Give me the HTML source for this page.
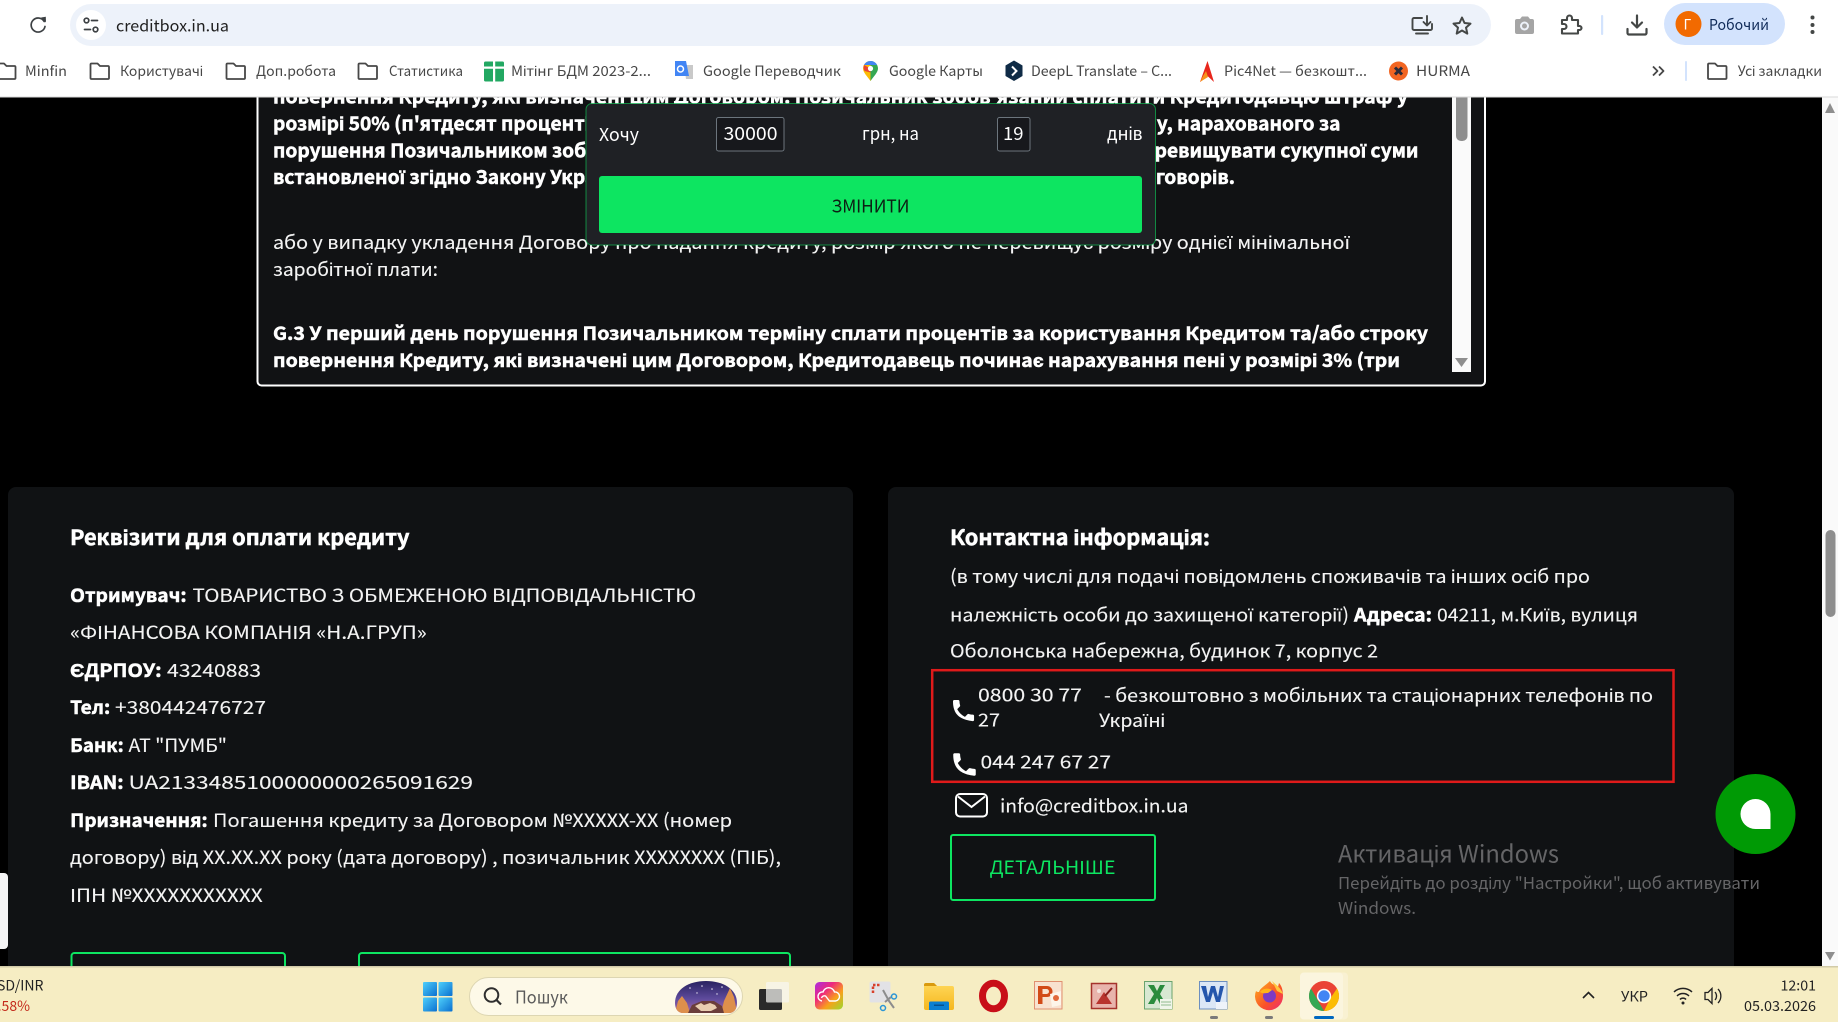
<!DOCTYPE html>
<html lang="uk"><head><meta charset="utf-8"><title>creditbox.in.ua</title>
<style>
html,body{margin:0;padding:0;width:1838px;height:1022px;overflow:hidden;background:#000}
svg{display:block;position:absolute;left:0;top:0}
text{font-family:"Noto Sans CJK SC","Liberation Sans",sans-serif;white-space:pre}
.r{font-size:18.5px;fill:#f4f4f4;font-weight:400;stroke:#f4f4f4;stroke-width:.12px}
.b{font-size:18.5px;fill:#fff;font-weight:700;stroke:#fff;stroke-width:.5px}
.p{font-size:19.2px;fill:#fff;font-weight:700;stroke:#fff;stroke-width:.5px}
.h{font-size:21px;fill:#fff;font-weight:700;stroke:#fff;stroke-width:.55px}
.m{font-size:14px;fill:#474747}
.t{font-size:14px;fill:#222}
.a{fill:#656567;font-weight:400}
</style></head><body>
<svg width="1838" height="1022" viewBox="0 0 1838 1022" xmlns="http://www.w3.org/2000/svg">
<defs>
<linearGradient id="win" x1="0" y1="0" x2="1" y2="1"><stop offset="0" stop-color="#4fd0fb"/><stop offset="1" stop-color="#0a6fd0"/></linearGradient>
<linearGradient id="cc" x1="0" y1="0" x2="1" y2="1"><stop offset="0" stop-color="#a92be6"/><stop offset=".35" stop-color="#ee2a7b"/><stop offset=".65" stop-color="#f9a01b"/><stop offset="1" stop-color="#9ad92e"/></linearGradient>
<linearGradient id="fo" x1="0" y1="0" x2="0" y2="1"><stop offset="0" stop-color="#ffd85a"/><stop offset="1" stop-color="#f5b71f"/></linearGradient>
<linearGradient id="ff" x1="0" y1="0" x2="1" y2="1"><stop offset="0" stop-color="#ffb31a"/><stop offset=".6" stop-color="#f9502a"/><stop offset="1" stop-color="#ec2a78"/></linearGradient>
<linearGradient id="sky" x1="0" y1="0" x2="0" y2="1"><stop offset="0" stop-color="#2a2360"/><stop offset=".55" stop-color="#5d4a9c"/><stop offset="1" stop-color="#a869a8"/></linearGradient>
<clipPath id="art"><path d="M675 1003c0-14 14-22 31-22s31 8 31 22c0 6-3 10-8 10h-46c-5 0-8-4-8-10z"/></clipPath>
</defs>

<!-- page -->
<rect width="1838" height="1022" fill="#000"/>

<!-- text box -->
<rect x="257.500" y="80" width="1227.500" height="305.500" rx="4" fill="#111214" stroke="#fff" stroke-width="2"/>
<text class="b" x="273" y="103.500" textLength="1135" lengthAdjust="spacingAndGlyphs">повернення Кредиту, які визначені цим Договором. Позичальник зобов'язаний сплатити Кредитодавцю штраф у</text>
<text class="p" x="273" y="130.500">розмірі 50% (п'ятдесят процентів) від</text>
<text class="p" x="1340.500" y="130.500" text-anchor="end">у, нарахованого за</text>
<text class="p" x="273" y="157.500">порушення Позичальником зобов'язань</text>
<text class="p" x="1418.500" y="157.500" text-anchor="end">перевищувати сукупної суми</text>
<text class="p" x="273" y="184">встановленої згідно Закону України</text>
<text class="p" x="1235" y="184" text-anchor="end">договорів.</text>
<text class="r" x="273" y="249" textLength="1077" lengthAdjust="spacingAndGlyphs">або у випадку укладення Договору про надання кредиту, розмір якого не перевищує розміру однієї мінімальної</text>
<text class="r" x="273" y="276" textLength="165" lengthAdjust="spacingAndGlyphs">заробітної плати:</text>
<text class="b" x="273" y="340" textLength="1155" lengthAdjust="spacingAndGlyphs">G.3 У перший день порушення Позичальником терміну сплати процентів за користування Кредитом та/або строку</text>
<text class="b" x="273" y="367" textLength="1127" lengthAdjust="spacingAndGlyphs">повернення Кредиту, які визначені цим Договором, Кредитодавець починає нарахування пені у розмірі 3% (три</text>
<rect x="1452" y="97" width="19" height="275" fill="#fafafa"/>
<rect x="1456" y="90" width="11.500" height="51" rx="5" fill="#8e8e8e"/>
<path d="M1455 358h13l-6.500 9z" fill="#8e8e8e"/>

<!-- popup -->
<rect x="586" y="103.500" width="569.500" height="141.500" rx="6" fill="#1f2125" stroke="#0de561" stroke-opacity=".55"/>
<text x="599" y="141" font-size="18" fill="#fff" textLength="40" lengthAdjust="spacingAndGlyphs">Хочу</text>
<rect x="716.500" y="117.500" width="67.500" height="33.500" rx="2" fill="#17181c" stroke="#6c757d"/>
<text x="723.500" y="140" font-size="18" fill="#fff" textLength="54" lengthAdjust="spacingAndGlyphs">30000</text>
<text x="862" y="140" font-size="18" fill="#fff" textLength="57" lengthAdjust="spacingAndGlyphs">грн, на</text>
<rect x="997.500" y="117.500" width="32.500" height="33.500" rx="2" fill="#17181c" stroke="#6c757d"/>
<text x="1003" y="140" font-size="18" fill="#fff" textLength="20.500" lengthAdjust="spacingAndGlyphs">19</text>
<text x="1107" y="140" font-size="18" fill="#fff" textLength="35.500" lengthAdjust="spacingAndGlyphs">днів</text>
<rect x="599" y="176" width="543" height="57" rx="3" fill="#0de561"/>
<text x="831.500" y="212.500" font-size="18" fill="#0d1f14" textLength="78" lengthAdjust="spacingAndGlyphs">ЗМІНИТИ</text>

<!-- cards -->
<rect x="8" y="487" width="845" height="500" rx="8" fill="#101214"/>
<rect x="888" y="487" width="846" height="500" rx="8" fill="#101214"/>

<text class="h" x="70" y="545" textLength="339.500" lengthAdjust="spacingAndGlyphs">Реквізити для оплати кредиту</text>
<text class="b" x="70.200" y="602" textLength="116.500" lengthAdjust="spacingAndGlyphs">Отримувач:</text>
<text class="r" x="192.500" y="602" textLength="503.500" lengthAdjust="spacingAndGlyphs">ТОВАРИСТВО З ОБМЕЖЕНОЮ ВІДПОВІДАЛЬНІСТЮ</text>
<text class="r" x="70.200" y="639" textLength="356.500" lengthAdjust="spacingAndGlyphs">«ФІНАНСОВА КОМПАНІЯ «Н.А.ГРУП»</text>
<text class="b" x="70.200" y="677" textLength="91.500" lengthAdjust="spacingAndGlyphs">ЄДРПОУ:</text>
<text class="r" x="167" y="677" textLength="94" lengthAdjust="spacingAndGlyphs">43240883</text>
<text class="b" x="70.200" y="714" textLength="40" lengthAdjust="spacingAndGlyphs">Тел:</text>
<text class="r" x="115" y="714" textLength="151" lengthAdjust="spacingAndGlyphs">+380442476727</text>
<text class="b" x="70.200" y="752" textLength="53.500" lengthAdjust="spacingAndGlyphs">Банк:</text>
<text class="r" x="128.500" y="752" textLength="98.500" lengthAdjust="spacingAndGlyphs">АТ "ПУМБ"</text>
<text class="b" x="70.200" y="789" textLength="53.500" lengthAdjust="spacingAndGlyphs">IBAN:</text>
<text class="r" x="128.500" y="789" textLength="344.500" lengthAdjust="spacingAndGlyphs">UA2133485100000000265091629</text>
<text class="b" x="70.200" y="827" textLength="137.500" lengthAdjust="spacingAndGlyphs">Призначення:</text>
<text class="r" x="213" y="827" textLength="519" lengthAdjust="spacingAndGlyphs">Погашення кредиту за Договором №XXXXX-XX (номер</text>
<text class="r" x="70" y="864" textLength="711" lengthAdjust="spacingAndGlyphs">договору) від XX.XX.XX року (дата договору) , позичальник XXXXXXXX (ПІБ),</text>
<text class="r" x="70.200" y="902" textLength="192.500" lengthAdjust="spacingAndGlyphs">ІПН №XXXXXXXXXXX</text>
<path d="M71.500 975v-19a3 3 0 0 1 3-3h207.500a3 3 0 0 1 3 3v19M359 975v-19a3 3 0 0 1 3-3h425a3 3 0 0 1 3 3v19" fill="none" stroke="#0de561" stroke-width="2"/>

<text class="h" x="950" y="545" textLength="260" lengthAdjust="spacingAndGlyphs">Контактна інформація:</text>
<text class="r" x="950" y="583" textLength="640" lengthAdjust="spacingAndGlyphs">(в тому числі для подачі повідомлень споживачів та інших осіб про</text>
<text class="r" x="950" y="621.500" textLength="399" lengthAdjust="spacingAndGlyphs">належність особи до захищеної категорії)</text>
<text class="b" x="1354" y="621.500" textLength="78" lengthAdjust="spacingAndGlyphs">Адреса:</text>
<text class="r" x="1437" y="621.500" textLength="201" lengthAdjust="spacingAndGlyphs">04211, м.Київ, вулиця</text>
<text class="r" x="950" y="657.700" textLength="428" lengthAdjust="spacingAndGlyphs">Оболонська набережна, будинок 7, корпус 2</text>
<rect x="932.200" y="670.200" width="741.300" height="111.600" fill="none" stroke="#df1a1a" stroke-width="2.500"/>
<path transform="translate(949.500 696.500) scale(1.17)" fill="#fff" d="M6.620 10.790c1.440 2.830 3.760 5.140 6.590 6.590l2.200-2.200c.27-.27.67-.36 1.020-.24 1.120.37 2.330.57 3.570.57.55 0 1 .45 1 1V20c0 .55-.45 1-1 1-1.800-.1-9-1-13-5S3 6 3 4c0-.55.45-1 1-1h3.500c.55 0 1 .45 1 1 0 1.250.2 2.450.57 3.570.11.35.03.74-.25 1.020l-2.200 2.200z"/>
<text class="r" x="978" y="701.700" textLength="104" lengthAdjust="spacingAndGlyphs">0800 30 77</text>
<text class="r" x="978" y="726.700" textLength="22" lengthAdjust="spacingAndGlyphs">27</text>
<text class="r" x="1104" y="702" textLength="549" lengthAdjust="spacingAndGlyphs">- безкоштовно з мобільних та стаціонарних телефонів по</text>
<text class="r" x="1099" y="727" textLength="66" lengthAdjust="spacingAndGlyphs">Україні</text>
<path transform="translate(949.500 749.500) scale(1.250)" fill="#fff" d="M6.620 10.790c1.440 2.830 3.760 5.140 6.590 6.590l2.200-2.200c.27-.27.67-.36 1.020-.24 1.120.37 2.330.57 3.570.57.55 0 1 .45 1 1V20c0 .55-.45 1-1 1-1.800-.1-9-1-13-5S3 6 3 4c0-.55.45-1 1-1h3.500c.55 0 1 .45 1 1 0 1.250.2 2.450.57 3.570.11.35.03.74-.25 1.020l-2.200 2.200z"/>
<text class="r" x="980.500" y="768.700" textLength="130.500" lengthAdjust="spacingAndGlyphs">044 247 67 27</text>
<rect x="956" y="794" width="31" height="22.500" rx="4" fill="none" stroke="#fff" stroke-width="2"/>
<path d="M958 796.500l13.500 10.500L985 796.500" fill="none" stroke="#fff" stroke-width="2"/>
<text class="r" x="1000" y="812.500" textLength="188.500" lengthAdjust="spacingAndGlyphs">info@creditbox.in.ua</text>
<rect x="951" y="835" width="204" height="65" rx="2" fill="none" stroke="#0de561" stroke-width="2"/>
<text x="989.500" y="874" font-size="18.500" fill="#0de561" textLength="126" lengthAdjust="spacingAndGlyphs">ДЕТАЛЬНІШЕ</text>

<text class="a" x="1338" y="862.500" font-size="24" textLength="221" lengthAdjust="spacingAndGlyphs">Активація Windows</text>
<text class="a" x="1338" y="889" font-size="16.500" textLength="422" lengthAdjust="spacingAndGlyphs">Перейдіть до розділу "Настройки", щоб активувати</text>
<text class="a" x="1338" y="914" font-size="16.500" textLength="78" lengthAdjust="spacingAndGlyphs">Windows.</text>

<circle cx="1755.500" cy="814" r="40" fill="#009a05"/>
<path d="M1770.500 829h-15a15 15 0 1 1 15-15z" fill="#fff"/>

<rect x="-6" y="873" width="14" height="76" rx="4" fill="#f5f5f5"/>

<!-- outer scrollbar -->
<rect x="1822" y="97" width="16" height="869" fill="#fafafa"/>
<rect x="1825.500" y="530" width="10" height="87" rx="5" fill="#8e8e8e"/>
<path d="M1825 113l5-10 5 10zM1825 952h10l-5 8.500z" fill="#8e8e8e"/>

<!-- chrome -->
<rect width="1838" height="97" fill="#fff"/>
<rect y="96.500" width="1838" height="1" fill="#d9d9d9"/>
<rect x="70" y="4" width="1421" height="42" rx="21" fill="#edf2fa"/>
<circle cx="91" cy="25" r="15" fill="#fff"/>
<g fill="none" stroke="#3c4043" stroke-width="1.700" stroke-linecap="round">
<path d="M44.200 21.500a7 7 0 1 0 .8 5"/>
<circle cx="86.500" cy="20.500" r="2.300"/><path d="M91.500 20.500h6M84.500 29.500h6"/><circle cx="95.500" cy="29.500" r="2.300"/>
</g>
<path d="M41 17.500l4.800-.8.200 5.800z" fill="#3c4043"/>
<text x="116" y="31.500" font-size="16" fill="#1f1f1f" textLength="113" lengthAdjust="spacingAndGlyphs">creditbox.in.ua</text>

<!-- toolbar right -->
<g fill="none" stroke="#444746" stroke-width="1.900" stroke-linejoin="round" stroke-linecap="round">
<path d="M1422 18h-8a1.500 1.500 0 0 0-1.500 1.500v9a1.500 1.500 0 0 0 1.500 1.500h16.500a1.500 1.500 0 0 0 1.500-1.500V24M1416 33.500h12"/>
<path d="M1427 16v9M1423.500 22l3.500 3.500 3.500-3.500"/>
<path d="M1462 17.500l2.500 5.500 6 .6-4.500 4 1.300 6-5.300-3.100-5.300 3.100 1.300-6-4.500-4 6-.6z" stroke-width="2"/>
<path d="M1562 20h5v-2a2.500 2.500 0 0 1 5 0v2h6v6h1.500a2 2 0 0 1 0 4H1578v3.500h-16V29h2a2.500 2.500 0 0 0 0-5h-2z" stroke-width="2.100"/>
<path d="M1637 15.500v12M1632 22.500l5 5 5-5M1627.500 29v4a1.500 1.500 0 0 0 1.500 1.500h16a1.500 1.500 0 0 0 1.500-1.500v-4" stroke-width="2.200"/>
</g>
<path d="M1515 21a2 2 0 0 1 2-2h3l2-2.500h6l2 2.500h2a2 2 0 0 1 2 2v11a2 2 0 0 1-2 2h-15a2 2 0 0 1-2-2z" fill="#a5a5a5"/>
<circle cx="1524.500" cy="26" r="4.500" fill="#edf2fa"/><circle cx="1524.500" cy="26" r="2.500" fill="#a5a5a5"/>
<rect x="1601" y="15" width="2.200" height="20" rx="1" fill="#d3e3fd"/>
<rect x="1664" y="3" width="121" height="42" rx="21" fill="#d3e3fd"/>
<circle cx="1688.500" cy="24" r="13" fill="#f26a00"/>
<text x="1683.500" y="29.500" font-size="14" fill="#fff">Г</text>
<text x="1709" y="30" font-size="15" fill="#0f2a58" textLength="60" lengthAdjust="spacingAndGlyphs">Робочий</text>
<g fill="#444746"><circle cx="1812.500" cy="17.500" r="2"/><circle cx="1812.500" cy="25" r="2"/><circle cx="1812.500" cy="32" r="2"/></g>

<!-- bookmarks -->
<g fill="none" stroke="#474747" stroke-width="1.800" stroke-linejoin="round">
<path d="M-3 63.500h7l2.500 2.500h8a1 1 0 0 1 1 1v11a1 1 0 0 1-1 1H-3z"/>
<path d="M90.500 64.500a1 1 0 0 1 1-1h6l2.500 2.500h8a1 1 0 0 1 1 1v11a1 1 0 0 1-1 1h-16.500a1 1 0 0 1-1-1z"/>
<path d="M226.500 64.500a1 1 0 0 1 1-1h6l2.500 2.500h8a1 1 0 0 1 1 1v11a1 1 0 0 1-1 1h-16.500a1 1 0 0 1-1-1z"/>
<path d="M358.500 64.500a1 1 0 0 1 1-1h6l2.500 2.500h8a1 1 0 0 1 1 1v11a1 1 0 0 1-1 1h-16.500a1 1 0 0 1-1-1z"/>
<path d="M1708 64.500a1 1 0 0 1 1-1h6l2.500 2.500h8a1 1 0 0 1 1 1v11a1 1 0 0 1-1 1H1709a1 1 0 0 1-1-1z"/>
<path d="M1653 66.500l4.500 4.500-4.500 4.500M1659 66.500l4.500 4.500-4.500 4.500"/>
</g>
<rect x="1685" y="61" width="2" height="20" rx="1" fill="#d3e3fd"/>
<text class="m" x="25" y="76" textLength="42" lengthAdjust="spacingAndGlyphs">Minfin</text>
<text class="m" x="120" y="76" textLength="83" lengthAdjust="spacingAndGlyphs">Користувачі</text>
<text class="m" x="256" y="76" textLength="80" lengthAdjust="spacingAndGlyphs">Доп.робота</text>
<text class="m" x="389" y="76" textLength="74" lengthAdjust="spacingAndGlyphs">Статистика</text>
<rect x="484" y="61.500" width="20" height="20" rx="1.500" fill="#22a862"/><path d="M493 61.500h2.200v20H493zM484 66.500h20v2.200h-20z" fill="#fff"/>
<text class="m" x="511" y="76" textLength="140" lengthAdjust="spacingAndGlyphs">Мітінг БДМ 2023-2...</text>
<path d="M684 65h9v14h-7z" fill="#c9c9c9"/><path d="M675 61h11l3 15h-14z" fill="#4285f4"/><circle cx="680.500" cy="69" r="3" fill="none" stroke="#fff" stroke-width="1.500"/>
<text class="m" x="703" y="76" textLength="138" lengthAdjust="spacingAndGlyphs">Google Переводчик</text>
<path d="M870.500 61a7.500 7.500 0 0 0-7.500 7.500c0 4 4.500 8 7.500 12.500z" fill="#fbbc04"/><path d="M870.500 61a7.500 7.500 0 0 1 7.500 7.500c0 4-4.500 8-7.500 12.500z" fill="#34a853"/><path d="M870.500 61a7.500 7.500 0 0 1 6.500 4l-13 0a7.500 7.500 0 0 1 6.500-4z" fill="#4285f4"/><path d="M864 65l6.500 3.500v4L864.500 71a7.500 7.500 0 0 1-.5-6z" fill="#ea4335"/><circle cx="870.500" cy="68.500" r="2.600" fill="#fff"/>
<text class="m" x="889" y="76" textLength="94" lengthAdjust="spacingAndGlyphs">Google Карты</text>
<path d="M1014 60.500l8.500 5v10.500l-8.500 5-8.500-5V65.500z" fill="#0f2b46"/><path d="M1012 66.500l4.500 4.500-4.500 4.500" fill="none" stroke="#fff" stroke-width="2"/>
<text class="m" x="1031" y="76" textLength="141" lengthAdjust="spacingAndGlyphs">DeepL Translate – C...</text>
<path d="M1207.500 61l6.500 21-6.500-6-7.500 6z" fill="#e8261c"/><path d="M1203 76l3-5 2 6-8 5z" fill="#f7941d"/>
<text class="m" x="1224" y="76" textLength="143" lengthAdjust="spacingAndGlyphs">Pic4Net — безкошт...</text>
<circle cx="1398.500" cy="71" r="9.500" fill="#f26522"/><path d="M1395 67.500l7 7M1402 67.500l-7 7" stroke="#2b2b3a" stroke-width="3"/>
<text class="m" x="1416" y="76" textLength="54" lengthAdjust="spacingAndGlyphs">HURMA</text>
<text class="m" x="1737.700" y="76" textLength="84.300" lengthAdjust="spacingAndGlyphs">Усі закладки</text>

<!-- taskbar -->
<rect y="966" width="1838" height="56" fill="#f6edc3"/>
<rect y="966" width="1838" height="1.500" fill="#d2cba8"/>
<text class="t" x="-13" y="990.700" textLength="56.500" lengthAdjust="spacingAndGlyphs">USD/INR</text>
<text x="30" y="1011" text-anchor="end" font-size="14" fill="#c42b1c">-0.58%</text>
<g fill="url(#win)"><rect x="423" y="982" width="14" height="14" rx="1"/><rect x="438.500" y="982" width="14" height="14" rx="1"/><rect x="423" y="997.500" width="14" height="14" rx="1"/><rect x="438.500" y="997.500" width="14" height="14" rx="1"/></g>
<rect x="469.500" y="977.500" width="273" height="38" rx="19" fill="#fdf9e8" stroke="#ddd6b2"/>
<circle cx="491.500" cy="995" r="6.800" fill="none" stroke="#2e2e2e" stroke-width="2"/><path d="M496.500 1000l4.500 4.500" stroke="#2e2e2e" stroke-width="2.200"/>
<text x="515" y="1003.500" font-size="17.500" fill="#5a5a5a" textLength="53" lengthAdjust="spacingAndGlyphs">Пошук</text>
<g clip-path="url(#art)"><rect x="675" y="981" width="62" height="32" fill="url(#sky)"/>
<g fill="#e8e4f2"><circle cx="690" cy="988" r=".8"/><circle cx="702" cy="986" r=".8"/><circle cx="712" cy="989" r=".8"/><circle cx="722" cy="987" r=".8"/><circle cx="697" cy="993" r=".7"/><circle cx="717" cy="994" r=".7"/></g>
<path d="M675 1013l3-12 4-5 5 7 3 10zM737 1013l-3-16-4-9-6 13-3 12z" fill="#dd8f4c"/>
<path d="M688 1013l4-8 10-4 12 0 8 5 2 7z" fill="#6a3d3a"/>
<path d="M695 1006l6-3 3 2 6-2 5 2 2 3-6 3-10 0z" fill="#e8cdb0"/></g>
<rect x="759" y="989" width="23" height="21" rx="1.500" fill="#2a2a2a"/>
<rect x="766" y="982" width="23" height="20.500" rx="1.500" fill="#f6f6f2" fill-opacity=".72"/>
<rect x="815" y="982" width="28" height="27.500" rx="4.500" fill="url(#cc)"/>
<path d="M822 1001a4.500 4.500 0 0 1 1-9 6 6 0 0 1 11.500 0 4.500 4.500 0 0 1 1 9h-6l-4-5a3 3 0 0 0-4 2" fill="none" stroke="#fff" stroke-width="1.400"/>
<rect x="869.500" y="981.500" width="21" height="21" rx="2" fill="#e2e2e6"/>
<path d="M873 993v-8h8" fill="none" stroke="#d8402a" stroke-width="2.500" stroke-dasharray="2.500 1.500"/>
<path d="M883 990l6 11 5 7M891 997l-6 5" fill="none" stroke="#8d8d8d" stroke-width="2"/>
<circle cx="894" cy="996.500" r="2.500" fill="none" stroke="#2a95d6" stroke-width="1.500"/><circle cx="883" cy="1008" r="2.500" fill="none" stroke="#2a95d6" stroke-width="1.500"/>
<path d="M924 985a2 2 0 0 1 2-2h8l3 3h15a2 2 0 0 1 2 2v20a2 2 0 0 1-2 2h-26a2 2 0 0 1-2-2z" fill="url(#fo)"/><path d="M924 985a2 2 0 0 1 2-2h8l3 3h-13z" fill="#d99a0e"/>
<path d="M929 1003a1.500 1.500 0 0 1 1.500-1.500h17a1.500 1.500 0 0 1 1.500 1.500v7h-20z" fill="#0a7fd0"/><rect x="934" y="1004.500" width="10" height="1.500" fill="#05508c"/>
<ellipse cx="993.500" cy="996" rx="11" ry="12.800" fill="none" stroke="#c80f18" stroke-width="7"/>
<rect x="1034.500" y="981.500" width="27.500" height="27.500" fill="#f8e2d0" stroke="#e09070"/>
<path fill-rule="evenodd" d="M1038 986h9a5.500 5.500 0 0 1 0 11h-4.500v7H1038zM1042.500 989v5h4a2.500 2.500 0 0 0 0-5z" fill="#d24a17"/><path d="M1050 994l11-3v14l-9 2z" fill="#fdf5ea"/><circle cx="1056" cy="998" r="3" fill="#e2683a"/>
<rect x="1091.500" y="983.500" width="25" height="25" fill="#e8b4ac" stroke="#a5332c" stroke-width="1.500"/>
<path d="M1096 1004l8-12 8 12z" fill="#b8342e"/><path d="M1105 996l7-8" stroke="#8c1f1a" stroke-width="2"/><circle cx="1099" cy="991" r="2" fill="#f5e6e0"/>
<rect x="1144.500" y="981.500" width="27.500" height="27.500" fill="#d8e8d2" stroke="#6aa36e"/>
<path d="M1148 985h6l3 6 3-6h5l-5 9 6 10h-6l-3-6-3 6h-6l6-10z" fill="#2a8b3c"/><path d="M1160 999h12v10h-12z" fill="#f0f5ea"/><path d="M1161 1002h10M1161 1005h10" stroke="#8fbc8f"/>
<rect x="1199.500" y="981.500" width="27.500" height="27.500" fill="#dbe7f6" stroke="#6c8fc0"/>
<path d="M1201 986h5l2 11 3-11h4l3 11 2-11h4l-4 16h-4l-3-10-3 10h-4z" fill="#2456ac"/><path d="M1216 1002h11v7h-11z" fill="#eef3fa"/>
<path d="M1270 981c1 3 5 4 8 6l1-4c3 3 4 8 4 13a14 14 0 1 1-27-5c1 1 2 1 3 1 1-4 6-6 11-11z" fill="url(#ff)"/><path d="M1272 981c4 4 9 7 11 13l-6-3z" fill="#ffc53d"/><circle cx="1269.500" cy="996" r="6.500" fill="#7c3bc4"/><path d="M1260 992c3-4 9-4 12-2l-4 3c-3 0-5 1-8-1z" fill="#ffb31a"/>
<rect x="1300" y="972.500" width="48" height="47" rx="4" fill="#f9f1d2"/><rect x="1300" y="972.500" width="43" height="47" rx="4" fill="#fbf5de"/>
<circle cx="1324" cy="996" r="15" fill="#ea4335"/>
<path d="M1324 1011a15 15 0 0 1-13-22.500l7.500 13z" fill="#34a853"/><path d="M1337 988.500a15 15 0 0 1-13 22.500l6.500-13z" fill="#fbbc04"/>
<circle cx="1324" cy="996" r="7.200" fill="#fff"/><circle cx="1324" cy="996" r="5.700" fill="#4285f4"/>
<rect x="1314" y="1016" width="20" height="3" rx="1.500" fill="#0067c0"/>
<rect x="1210" y="1016" width="8" height="3" rx="1.500" fill="#7a7a7a"/><rect x="1265" y="1016" width="8" height="3" rx="1.500" fill="#7a7a7a"/>
<path d="M1583 998l5.500-5.500 5.500 5.500" fill="none" stroke="#222" stroke-width="1.600"/>
<text class="t" x="1621" y="1001.500" textLength="27" lengthAdjust="spacingAndGlyphs">УКР</text>
<g fill="none" stroke="#222" stroke-width="1.500"><path d="M1674 992a13 13 0 0 1 18 0M1677 996a8.500 8.500 0 0 1 12 0M1680 999.500a4 4 0 0 1 6 0"/><path d="M1705 992.500h3l4-4v15l-4-4h-3zM1715 992a6 6 0 0 1 0 8M1718 989a10 10 0 0 1 0 14" stroke-width="1.300"/></g>
<circle cx="1683" cy="1003" r="1.500" fill="#222"/>
<text class="t" x="1780.500" y="990.700" textLength="35.500" lengthAdjust="spacingAndGlyphs">12:01</text>
<text class="t" x="1744" y="1011" textLength="72" lengthAdjust="spacingAndGlyphs">05.03.2026</text>
</svg>
</body></html>
